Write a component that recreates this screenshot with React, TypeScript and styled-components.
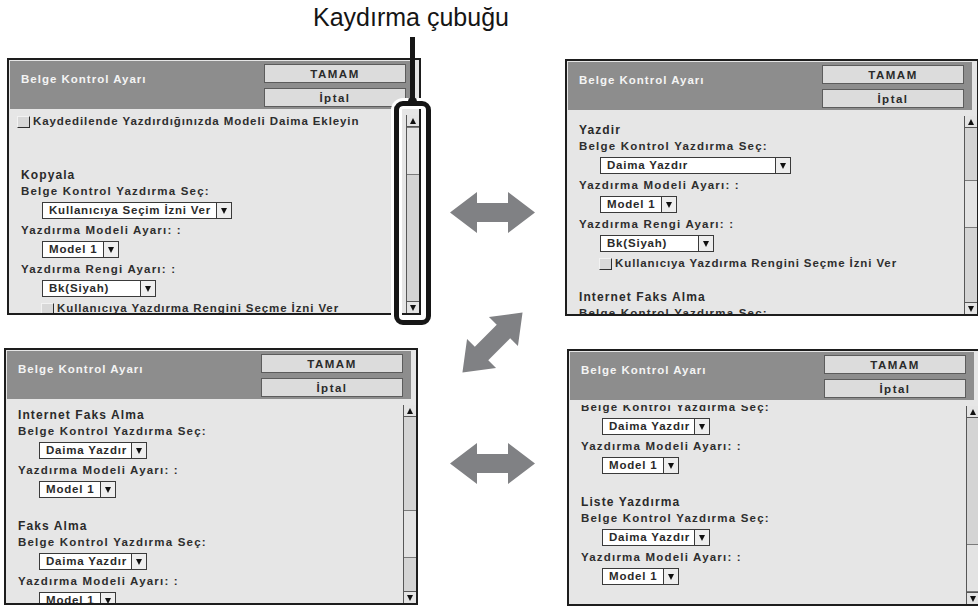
import React from 'react';
import styled, { createGlobalStyle } from 'styled-components';

const FONT = `"Liberation Sans", Arial, Helvetica, sans-serif`;

const GlobalStyle = createGlobalStyle`
  html, body { margin: 0; padding: 0; background: #ffffff; }
  body { font-family: ${FONT}; }
  * { box-sizing: border-box; }
`;

type Item =
  | { k: 'check'; text: string; top?: boolean }
  | { k: 'spacer'; h: number }
  | { k: 'heading'; text: string }
  | { k: 'label'; text: string }
  | { k: 'select'; text: string; w: number };

const L1 = 'Belge Kontrol Yazdırma Seç:';
const L2 = 'Yazdırma Modeli Ayarı: :';
const L3 = 'Yazdırma Rengi Ayarı: :';
const CB2 = 'Kullanıcıya Yazdırma Rengini Seçme İzni Ver';

const shortSection = (title: string): Item[] => [
  { k: 'spacer', h: 17 },
  { k: 'heading', text: title },
  { k: 'label', text: L1 },
  { k: 'select', text: 'Daima Yazdır', w: 108 },
  { k: 'label', text: L2 },
  { k: 'select', text: 'Model 1', w: 77 },
];

const ITEMS: Item[] = [
  { k: 'check', text: 'Kaydedilende Yazdırdığınızda Modeli Daima Ekleyin', top: true },
  { k: 'spacer', h: 38 },
  { k: 'heading', text: 'Kopyala' },
  { k: 'label', text: L1 },
  { k: 'select', text: 'Kullanıcıya Seçim İzni Ver', w: 190 },
  { k: 'label', text: L2 },
  { k: 'select', text: 'Model 1', w: 77 },
  { k: 'label', text: L3 },
  { k: 'select', text: 'Bk(Siyah)', w: 114 },
  { k: 'check', text: CB2 },
  { k: 'spacer', h: 17 },
  { k: 'heading', text: 'Yazdir' },
  { k: 'label', text: L1 },
  { k: 'select', text: 'Daima Yazdır', w: 191 },
  { k: 'label', text: L2 },
  { k: 'select', text: 'Model 1', w: 77 },
  { k: 'label', text: L3 },
  { k: 'select', text: 'Bk(Siyah)', w: 114 },
  { k: 'check', text: CB2 },
  ...shortSection('Internet Faks Alma'),
  ...shortSection('Faks Alma'),
  ...shortSection('Liste Yazdırma'),
];

const itemHeight = (it: Item): number => {
  switch (it.k) {
    case 'check':
      return it.top ? 15 : 17;
    case 'spacer':
      return it.h;
    case 'heading':
      return 16;
    case 'label':
      return 17;
    case 'select':
      return 22;
  }
};

const OFFSETS: number[] = [];
ITEMS.reduce((y, it) => {
  OFFSETS.push(y);
  return y + itemHeight(it);
}, 0);

const VIEW_H = 199;
const MAX_SCROLL = 520;
const MAX_THUMB = 126;

/* ---------- page layout ---------- */

const Page = styled.div`
  position: relative;
  width: 978px;
  height: 606px;
  overflow: hidden;
  background: #ffffff;
`;

const Grid = styled.div`
  display: grid;
  grid-template-columns: 421px 144px 413px;
  grid-template-rows: 258px 258px;
  row-gap: 32px;
  padding-top: 58px;
`;

const ArrowColumn = styled.div`
  grid-column: 2;
  grid-row: 1 / span 2;
  display: flex;
  flex-direction: column;
  align-items: flex-start;
  padding-top: 134px;
`;

const ArrowSvg = styled.svg<{ $ml: number; $mt: number }>`
  display: block;
  flex: none;
  margin-left: ${(p) => p.$ml}px;
  margin-top: ${(p) => p.$mt}px;
`;

/* ---------- panel ---------- */

const Panel = styled.section<{ $col: number; $row: number; $dx: number; $dy: number }>`
  grid-column: ${(p) => p.$col};
  grid-row: ${(p) => p.$row};
  width: 414px;
  height: 257px;
  margin-left: ${(p) => p.$dx}px;
  margin-top: ${(p) => p.$dy}px;
  border: 2px solid #1d1d1d;
  background: #e6e6e6;
  padding: 1px 0 0 1px;
  display: flex;
  flex-direction: column;
  overflow: hidden;
`;

const Header = styled.header`
  flex: none;
  height: 48px;
  margin-right: 5px;
  background: #8d8d8d;
  display: flex;
  align-items: center;
  justify-content: space-between;
  padding: 0 8px 0 11px;
`;

const HeaderTitle = styled.div`
  color: #f4f4f4;
  font: bold 11.5px ${FONT};
  letter-spacing: 1px;
  margin-top: -12px;
  white-space: nowrap;
`;

const HeaderButtons = styled.div`
  display: flex;
  flex-direction: column;
  gap: 5px;
  padding-top: 1px;
`;

const HeaderButton = styled.div`
  width: 142px;
  height: 19px;
  background: #dcdcdc;
  border: 1px solid #5c5c5c;
  display: flex;
  align-items: center;
  justify-content: center;
  color: #2a2a2a;
  font: bold 11.5px ${FONT};
  letter-spacing: 1.5px;
`;

const Body = styled.div`
  flex: 1;
  min-height: 0;
  display: flex;
`;

const Content = styled.div`
  flex: 1;
  min-width: 0;
  overflow: hidden;
  margin-top: 5px;
  padding-left: 11px;
`;

const List = styled.div<{ $lead: number }>`
  margin-top: ${(p) => p.$lead}px;
  display: flex;
  flex-direction: column;
`;

const Spacer = styled.div<{ $h: number }>`
  flex: none;
  height: ${(p) => p.$h}px;
`;

const Heading = styled.div`
  flex: none;
  height: 16px;
  color: #2a2a2a;
  font: bold 12px/16px ${FONT};
  letter-spacing: 1.1px;
  white-space: nowrap;
`;

const Label = styled.div`
  flex: none;
  height: 17px;
  color: #2e2e2e;
  font: bold 11.5px/17px ${FONT};
  letter-spacing: 1.2px;
  white-space: nowrap;
`;

const SelectRow = styled.div`
  flex: none;
  height: 22px;
  padding: 2px 0 0 21px;
`;

const SelectBox = styled.div<{ $w: number }>`
  width: ${(p) => p.$w}px;
  height: 17px;
  border: 1px solid #3a3a3a;
  background: #ffffff;
  display: flex;
`;

const SelectText = styled.span`
  flex: 1;
  min-width: 0;
  padding-left: 6px;
  color: #2a2a2a;
  font: bold 11.5px/15px ${FONT};
  letter-spacing: 0.8px;
  white-space: nowrap;
  overflow: hidden;
`;

const SelectButton = styled.span`
  flex: none;
  width: 15px;
  border-left: 1px solid #3a3a3a;
  background: #eeeeee;
  display: flex;
  align-items: center;
  justify-content: center;
`;

const Tri = styled.span<{ $up?: boolean }>`
  width: 0;
  height: 0;
  border-left: 3.5px solid transparent;
  border-right: 3.5px solid transparent;
  ${(p) => (p.$up ? 'border-bottom: 6px solid #111;' : 'border-top: 6px solid #111;')}
`;

const CheckRow = styled.div<{ $top?: boolean }>`
  flex: none;
  height: ${(p) => (p.$top ? 15 : 17)}px;
  margin-left: ${(p) => (p.$top ? -4 : 20)}px;
  display: flex;
  align-items: center;
  gap: 3px;
`;

const CheckBox = styled.span`
  flex: none;
  width: 13px;
  height: 12px;
  background: #d8d8d8;
  border-top: 1px solid #f2f2f2;
  border-left: 1px solid #f2f2f2;
  border-right: 1px solid #2e2e2e;
  border-bottom: 1px solid #2e2e2e;
`;

const CheckText = styled.span`
  color: #2e2e2e;
  font: bold 11.5px/17px ${FONT};
  letter-spacing: 0.9px;
  white-space: nowrap;
`;

/* ---------- scrollbar ---------- */

const Scrollbar = styled.div`
  flex: none;
  width: 13px;
  margin-top: 6px;
  border-left: 1px solid #575757;
  background: #d4d4d4;
  display: flex;
  flex-direction: column;
`;

const ScrollArrow = styled.div<{ $down?: boolean }>`
  flex: none;
  height: 12px;
  background: #e4e4e4;
  ${(p) => (p.$down ? 'border-top: 1px solid #575757;' : 'border-bottom: 1px solid #575757;')}
  display: flex;
  align-items: center;
  justify-content: center;
`;

const Track = styled.div`
  flex: 1;
  display: flex;
  flex-direction: column;
`;

const Thumb = styled.div`
  flex: none;
  height: 48px;
  background: #e3e3e3;
  border-top: 1px solid #7a7a7a;
  border-bottom: 1px solid #7a7a7a;
`;

/* ---------- callout ---------- */

const CalloutLabel = styled.div`
  position: absolute;
  left: 411px;
  top: 5px;
  transform: translateX(-50%);
  color: #151515;
  font: 25px/25px ${FONT};
  white-space: nowrap;
`;

const CalloutBracket = styled.div`
  position: absolute;
  left: 394px;
  top: 101px;
  width: 37px;
  height: 224px;
  border: 5px solid #161616;
  border-radius: 9px;
  box-shadow: 0 0 0 3px #ffffff, inset 0 0 0 3px #ffffff;
`;

const CalloutLine = styled.div`
  position: absolute;
  left: 410px;
  top: 37px;
  width: 5px;
  height: 66px;
  background: #161616;
`;

const CalloutKnot = styled.div`
  position: absolute;
  left: 408px;
  top: 97px;
  width: 9px;
  height: 9px;
  border-radius: 50%;
  background: #161616;
`;

/* ---------- components ---------- */

const ARROW_PATH = 'M0 20.5 L27 0 L27 11 L58 11 L58 0 L85 20.5 L58 41 L58 30 L27 30 L27 41 Z';
const ARROW_FILL = '#808184';

function HArrow({ ml, mt }: { ml: number; mt: number }) {
  return (
    <ArrowSvg $ml={ml} $mt={mt} width={85} height={41} viewBox="0 0 85 41">
      <path d={ARROW_PATH} fill={ARROW_FILL} />
    </ArrowSvg>
  );
}

function DArrow({ ml, mt }: { ml: number; mt: number }) {
  return (
    <ArrowSvg $ml={ml} $mt={mt} width={61} height={61} viewBox="-30.5 -30.5 61 61">
      <g transform="rotate(-45) translate(-42.5 -20.5)">
        <path d={ARROW_PATH} fill={ARROW_FILL} />
      </g>
    </ArrowSvg>
  );
}

function Row({ item }: { item: Item }) {
  switch (item.k) {
    case 'spacer':
      return <Spacer $h={item.h} />;
    case 'heading':
      return <Heading>{item.text}</Heading>;
    case 'label':
      return <Label>{item.text}</Label>;
    case 'select':
      return (
        <SelectRow>
          <SelectBox $w={item.w}>
            <SelectText>{item.text}</SelectText>
            <SelectButton>
              <Tri />
            </SelectButton>
          </SelectBox>
        </SelectRow>
      );
    case 'check':
      return (
        <CheckRow $top={item.top}>
          <CheckBox />
          <CheckText>{item.text}</CheckText>
        </CheckRow>
      );
  }
}

function SettingsPanel({
  col,
  row,
  dx,
  dy,
  scroll,
}: {
  col: number;
  row: number;
  dx: number;
  dy: number;
  scroll: number;
}) {
  const thumbOffset = Math.round((scroll / MAX_SCROLL) * MAX_THUMB);
  const visible: number[] = [];
  ITEMS.forEach((it, i) => {
    const top = OFFSETS[i];
    const bottom = top + itemHeight(it);
    if (bottom > scroll && top < scroll + VIEW_H) visible.push(i);
  });
  const lead = visible.length ? OFFSETS[visible[0]] - scroll : 0;
  return (
    <Panel $col={col} $row={row} $dx={dx} $dy={dy}>
      <Header>
        <HeaderTitle>Belge Kontrol Ayarı</HeaderTitle>
        <HeaderButtons>
          <HeaderButton>TAMAM</HeaderButton>
          <HeaderButton>İptal</HeaderButton>
        </HeaderButtons>
      </Header>
      <Body>
        <Content>
          <List $lead={lead}>
            {visible.map((i) => (
              <Row key={i} item={ITEMS[i]} />
            ))}
          </List>
        </Content>
        <Scrollbar>
          <ScrollArrow>
            <Tri $up />
          </ScrollArrow>
          <Track>
            <Thumb style={{ marginTop: thumbOffset }} />
          </Track>
          <ScrollArrow $down>
            <Tri />
          </ScrollArrow>
        </Scrollbar>
      </Body>
    </Panel>
  );
}

export default function App() {
  return (
    <Page>
      <GlobalStyle />
      <Grid>
        <SettingsPanel col={1} row={1} dx={7} dy={0} scroll={0} />
        <SettingsPanel col={3} row={1} dx={0} dy={1} scroll={213} />
        <SettingsPanel col={1} row={2} dx={4} dy={0} scroll={384} />
        <SettingsPanel col={3} row={2} dx={2} dy={1} scroll={520} />
        <ArrowColumn>
          <HArrow ml={29} mt={0} />
          <DArrow ml={41} mt={79} />
          <HArrow ml={29} mt={70} />
        </ArrowColumn>
      </Grid>
      <CalloutLabel>Kaydırma çubuğu</CalloutLabel>
      <CalloutBracket />
      <CalloutLine />
      <CalloutKnot />
    </Page>
  );
}
